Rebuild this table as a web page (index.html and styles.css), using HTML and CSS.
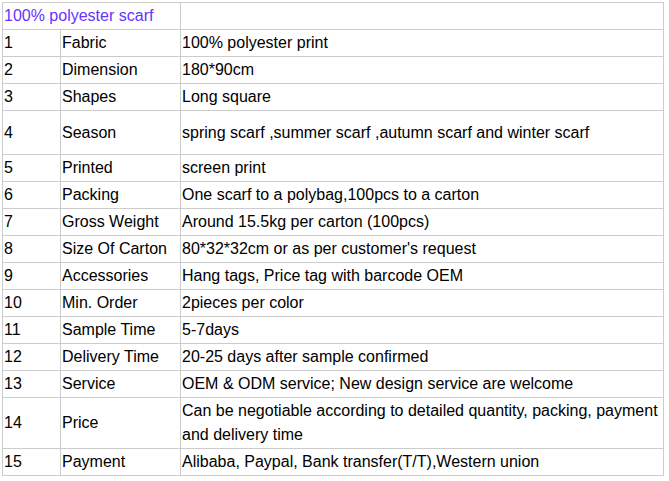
FILE: index.html
```html
<!DOCTYPE html>
<html>
<head>
<meta charset="utf-8">
<link rel="stylesheet" href="styles.css">
</head>
<body>
<table class="spec">
  <colgroup><col class="c1"><col class="c2"><col class="c3"></colgroup>
  <tr class="row"><td colspan="2" class="title">100% polyester scarf</td><td></td></tr>
  <tr class="row"><td>1</td><td>Fabric</td><td>100% polyester print</td></tr>
  <tr class="row"><td>2</td><td>Dimension</td><td>180*90cm</td></tr>
  <tr class="row"><td>3</td><td>Shapes</td><td>Long square</td></tr>
  <tr class="row tall"><td>4</td><td>Season</td><td>spring scarf ,summer scarf ,autumn scarf and winter scarf</td></tr>
  <tr class="row"><td>5</td><td>Printed</td><td>screen print</td></tr>
  <tr class="row"><td>6</td><td>Packing</td><td>One scarf to a polybag,100pcs to a carton</td></tr>
  <tr class="row"><td>7</td><td>Gross Weight</td><td>Around 15.5kg per carton (100pcs)</td></tr>
  <tr class="row"><td>8</td><td>Size Of Carton</td><td>80*32*32cm or as per customer's request</td></tr>
  <tr class="row"><td>9</td><td>Accessories</td><td>Hang tags, Price tag with barcode OEM</td></tr>
  <tr class="row"><td>10</td><td>Min. Order</td><td>2pieces per color</td></tr>
  <tr class="row"><td>11</td><td>Sample Time</td><td>5-7days</td></tr>
  <tr class="row"><td>12</td><td>Delivery Time</td><td>20-25 days after sample confirmed</td></tr>
  <tr class="row"><td>13</td><td>Service</td><td>OEM &amp; ODM service; New design service are welcome</td></tr>
  <tr class="row"><td>14</td><td>Price</td><td>Can be negotiable according to detailed quantity, packing, payment and delivery time</td></tr>
  <tr class="row"><td>15</td><td>Payment</td><td>Alibaba, Paypal, Bank transfer(T/T),Western union</td></tr>
</table>
</body>
</html>
```
FILE: styles.css
```css
html, body {
  margin: 0;
  padding: 0;
  background: #ffffff;
}
body {
  padding: 2px 0 0 2px;
  font-family: "Liberation Sans", Arial, sans-serif;
  font-size: 16px;
  color: #000000;
}
.spec {
  border-collapse: collapse;
  table-layout: fixed;
  width: 661px;
}
.c1 { width: 58px; }
.c2 { width: 120px; }
.c3 { width: 483px; }
.spec td {
  border: 1px solid #cccccc;
  padding: 1px 2px 1px 1px;
  line-height: 24px;
  vertical-align: middle;
  text-align: left;
  overflow: hidden;
}
.row { height: 27px; }
.tall { height: 44px; }
.title { color: #6633ff; }
```
